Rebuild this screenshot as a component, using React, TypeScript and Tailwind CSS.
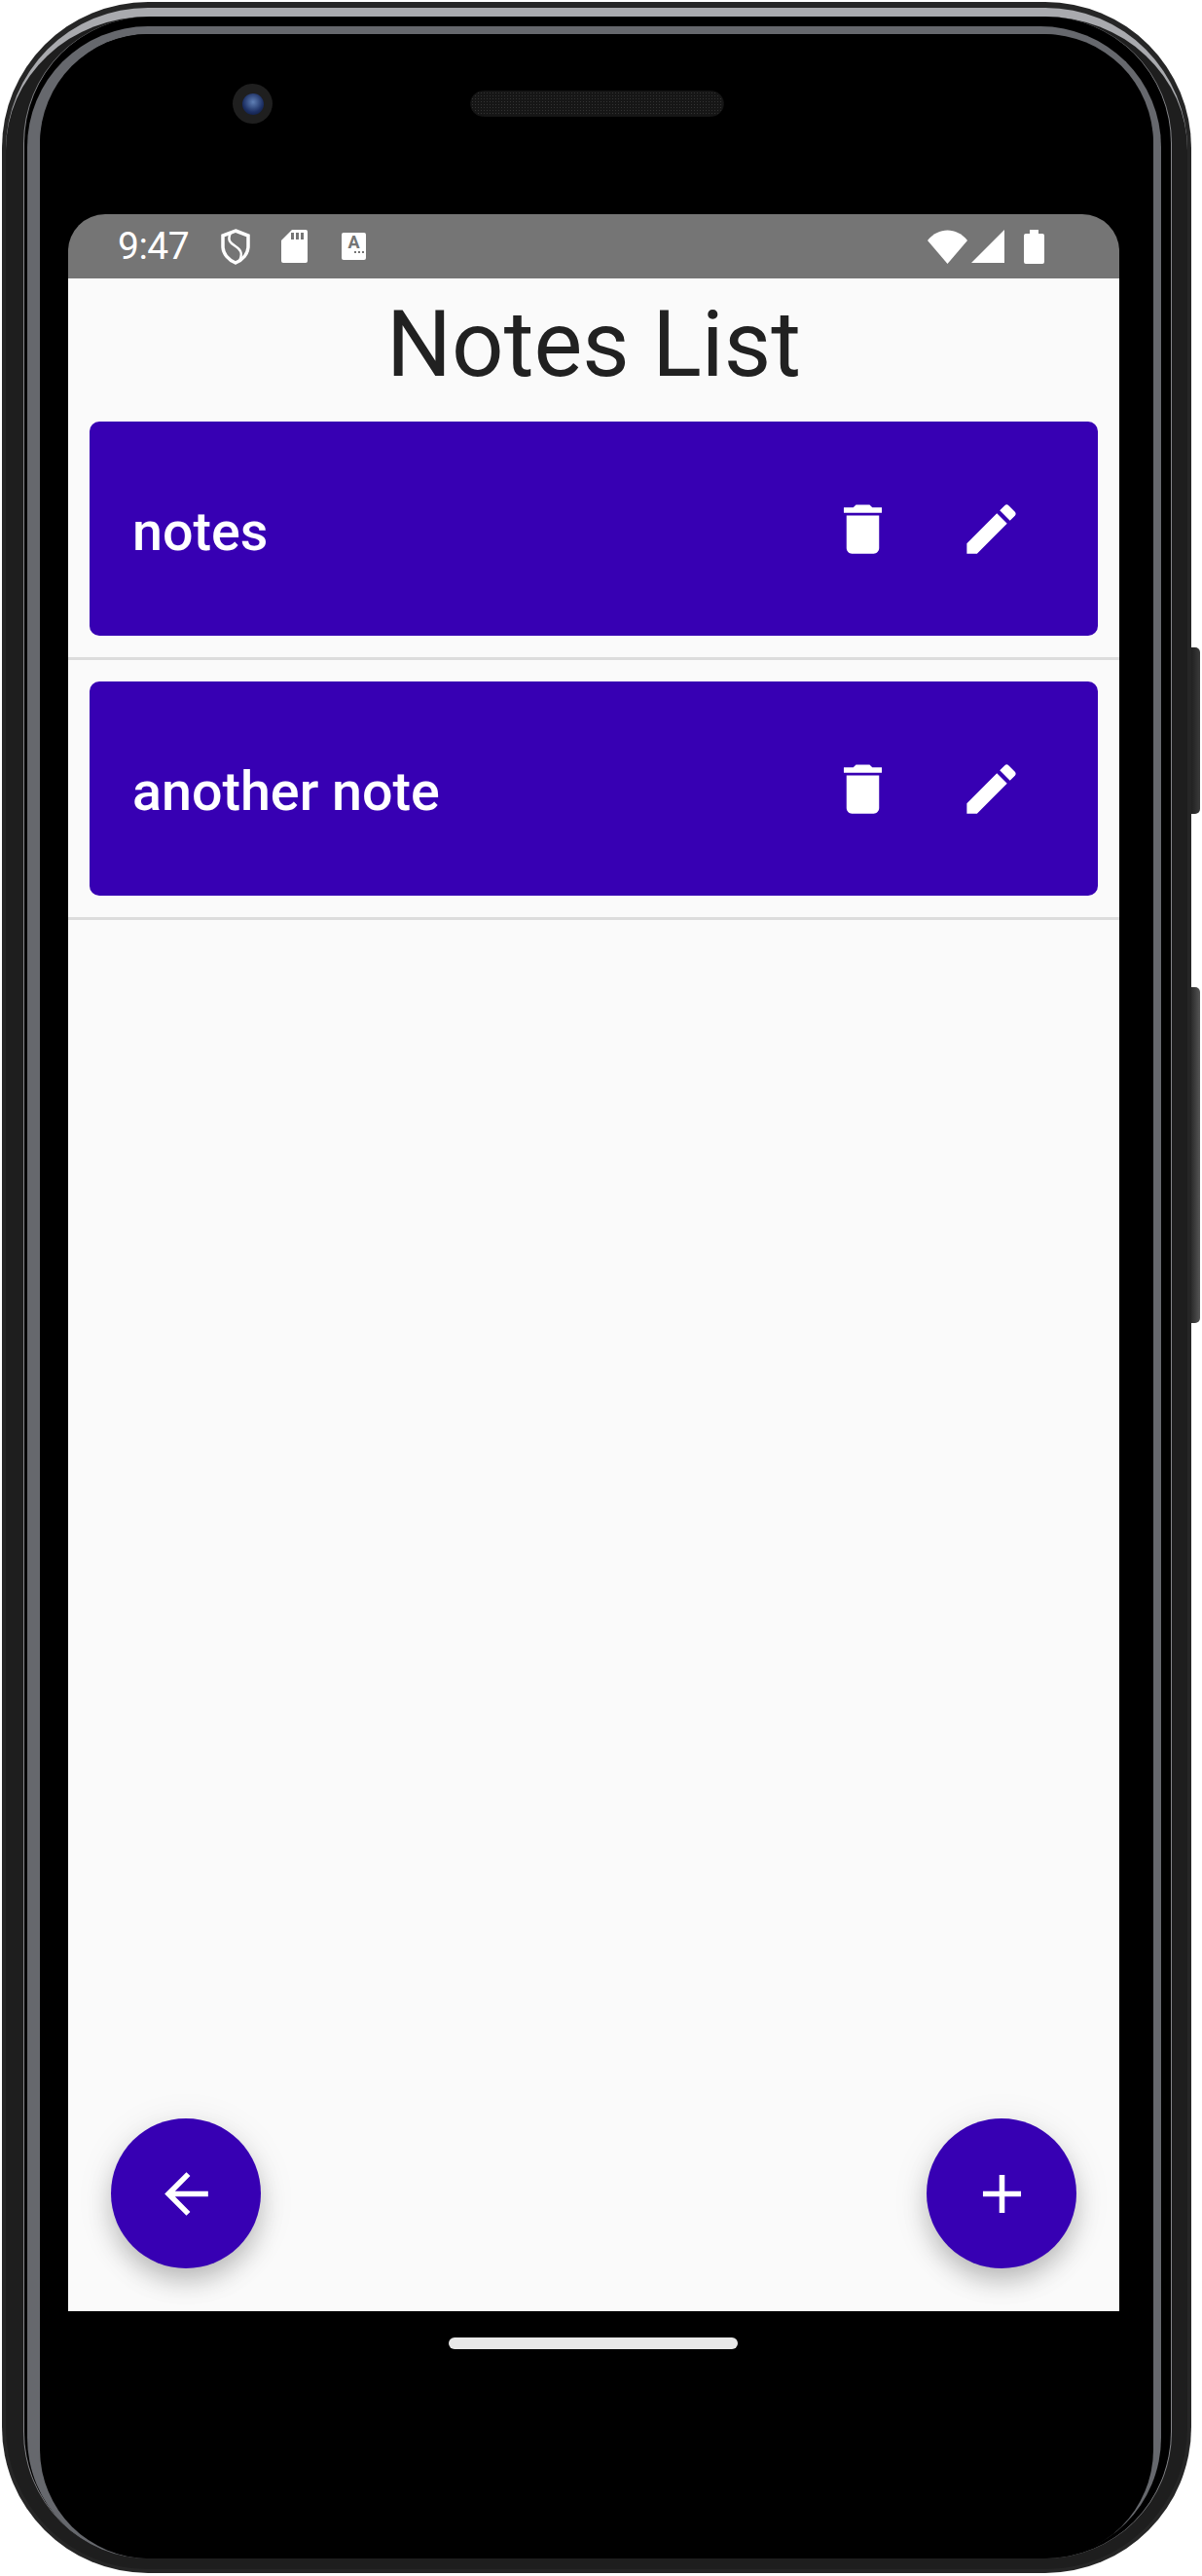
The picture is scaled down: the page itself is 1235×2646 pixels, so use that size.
const DELETE = "M6 19c0 1.1.9 2 2 2h8c1.1 0 2-.9 2-2V7H6v12zM19 4h-3.5l-1-1h-5l-1 1H5v2h14V4z";
const EDIT = "M3 17.25V21h3.75L17.81 9.94l-3.75-3.75L3 17.25zM20.71 7.04c.39-.39.39-1.02 0-1.41l-2.34-2.34c-.39-.39-1.02-.39-1.41 0l-1.83 1.83 3.75 3.75 1.83-1.83z";
const BACK = "M20 11H7.83l5.59-5.59L12 4l-8 8 8 8 1.41-1.41L7.83 13H20v-2z";
const ADD = "M19 13h-6v6h-2v-6H5v-2h6V5h2v6h6v2z";

function Icon({ d }: { d: string }) {
  return (
    <svg viewBox="0 0 24 24" fill="#ffffff" className="w-[67px] h-[67px] shrink-0">
      <path d={d} />
    </svg>
  );
}

function NoteRow({ title }: { title: string }) {
  return (
    <div className="px-[22px] pb-[22px] border-b-[3px] border-[#dcdcdc]">
      <div className="h-[220px] rounded-[10px] bg-[#3700b3] flex items-center pl-[44px] pr-[76px]">
        <span className="flex-1 text-white font-medium text-[55.6px] leading-none pt-[8px]">{title}</span>
        <Icon d={DELETE} />
        <div className="w-[65px]" />
        <Icon d={EDIT} />
      </div>
    </div>
  );
}

function Fab({ d }: { d: string }) {
  return (
    <button className="w-[154px] h-[154px] rounded-full bg-[#3700b3] flex items-center justify-center shadow-[0_14px_26px_-2px_rgba(0,0,0,0.22),0_6px_40px_0_rgba(0,0,0,0.09)]">
      <Icon d={d} />
    </button>
  );
}

function StatusBar() {
  return (
    <div className="h-[66px] shrink-0 bg-[#757575] rounded-t-[38px] flex items-center pl-[51px] pr-[77px] text-white">
      <span className="text-[39px] leading-none w-[72px] tracking-[-0.5px]">9:47</span>
      <svg viewBox="0 0 30 37" className="ml-[34px] w-[30px] h-[37px]" fill="none" stroke="#ffffff" strokeWidth="3.5">
        <path d="M15 2 L28 7 V18 C28 26 22 32 15 35 C8 32 2 26 2 18 V7 Z" />
        <path d="M10 4 C6 12 10 15 15 18 C20 21 23 25 19 33" strokeWidth="2.5" />
      </svg>
      <svg viewBox="0 0 27 34" className="ml-[32px] w-[27px] h-[34px]">
        <path d="M11 0 H25 a2 2 0 0 1 2 2 V32 a2 2 0 0 1 -2 2 H2 a2 2 0 0 1 -2 -2 V11 Z" fill="#ffffff" />
        <rect x="10" y="3" width="3" height="7" fill="#757575" />
        <rect x="15" y="3" width="3" height="7" fill="#757575" />
        <rect x="20" y="3" width="3" height="7" fill="#757575" />
      </svg>
      <div className="ml-[35px] w-[25px] h-[28px] bg-white rounded-[2px] flex flex-col items-center">
        <span className="text-[#757575] text-[18px] font-bold leading-[19px]">A</span>
        <div className="flex gap-[2px] self-end mr-[2px]">
          <div className="w-[2px] h-[2px] bg-[#757575]" />
          <div className="w-[2px] h-[2px] bg-[#757575]" />
          <div className="w-[2px] h-[2px] bg-[#757575]" />
        </div>
      </div>
      <div className="flex-1" />
      <svg viewBox="0 0 41 35" className="w-[41px] h-[35px]">
        <path d="M0 11 C11 -3 30 -3 41 11 L20.5 35 Z" fill="#ffffff" />
      </svg>
      <svg viewBox="0 0 34 34" className="ml-[4px] w-[34px] h-[34px]">
        <path d="M34 0 V34 H0 Z" fill="#ffffff" />
      </svg>
      <svg viewBox="0 0 21 35" className="ml-[20px] w-[21px] h-[35px]">
        <path d="M6 4 V0 H15 V4 H19 a2 2 0 0 1 2 2 V33 a2 2 0 0 1 -2 2 H2 a2 2 0 0 1 -2 -2 V6 a2 2 0 0 1 2 -2 Z" fill="#ffffff" />
      </svg>
    </div>
  );
}

export default function App() {
  return (
    <div className="relative w-[1235px] h-[2646px] bg-white pl-[2px] pt-[2px] font-['Roboto',sans-serif]">
      {/* side keys */}
      <div className="absolute left-[1222px] top-[665px] w-[11px] h-[171px] rounded-r-[5px] bg-[linear-gradient(90deg,#1c1c1c,#3a3a3a)]" />
      <div className="absolute left-[1222px] top-[1014px] w-[11px] h-[345px] rounded-r-[5px] bg-[linear-gradient(90deg,#222222,#555555)]" />

      {/* device shell, nested rings */}
      <div className="relative w-[1222px] h-[2641px] rounded-[150px] bg-[#262626] pt-[6px] pb-[4px] px-[4px]">
        <div className="h-full rounded-[146px] bg-[#1e1e1e] border-t-[9px] border-[#a9aaae] pl-[18px] pr-[16px] pb-[11px]">
          <div className="h-full rounded-[130px] bg-black border-x border-[#85868a] pl-[3px] pr-[10px] pt-[10px]">
            <div className="h-full rounded-[124px] bg-black border-t-[8px] border-l-[13px] border-r-[8px] border-[#66686d]">
              <div className="h-full rounded-[112px] bg-black flex flex-col">
                {/* top bezel */}
                <div className="h-[185px] shrink-0 flex items-start pt-[51px] pl-[198px]">
                  <div className="w-[41px] h-[41px] rounded-full bg-[#1f1f1f] flex items-center justify-center">
                    <div className="w-[22px] h-[22px] rounded-full bg-[radial-gradient(circle_at_50%_40%,#5f7fb5,#1c2f63_60%,#0a1230)]" />
                  </div>
                  <div className="ml-[203px] mt-[7px] w-[261px] h-[27px] rounded-full border border-[#141414] bg-[radial-gradient(#333333_1px,#161616_1px)] bg-[length:3px_3px]" />
                </div>

                {/* screen */}
                <div className="ml-[29px] w-[1080px] h-[2154px] shrink-0 flex flex-col">
                  <StatusBar />
                  <div className="flex-1 bg-[#fafafa] flex flex-col">
                    <div className="h-[147px] flex items-center justify-center text-[94px] leading-none text-[#212121] pb-[12px]">
                      Notes List
                    </div>
                    <NoteRow title="notes" />
                    <div className="h-[22px]" />
                    <NoteRow title="another note" />
                    <div className="flex-1" />
                    <div className="flex justify-between px-[44px] pb-[44px]">
                      <Fab d={BACK} />
                      <Fab d={ADD} />
                    </div>
                  </div>
                </div>

                {/* bottom bezel */}
                <div className="pt-[27px] pl-[420px]">
                  <div className="w-[297px] h-[12px] rounded-full bg-[#e8e8e8]" />
                </div>
              </div>
            </div>
          </div>
        </div>
      </div>
    </div>
  );
}
